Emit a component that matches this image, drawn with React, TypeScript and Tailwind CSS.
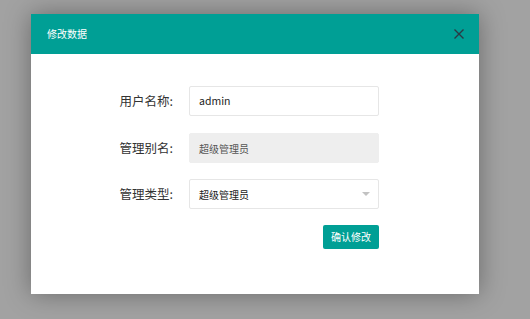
import React from "react";

const font = { fontFamily: '"Noto Sans CJK SC", "Noto Sans", sans-serif' };

function Row({ label, children, className = "" }: { label: string; children: React.ReactNode; className?: string }) {
  return (
    <div className={`flex items-center h-[30px] ${className}`}>
      <div className="w-[158px] pr-[16px] flex justify-end text-[12.5px] text-[#333333] leading-none">{label}</div>
      <div className="w-[190px] h-full">{children}</div>
    </div>
  );
}

export default function App() {
  return (
    <div className="w-[530px] h-[319px] bg-[#a2a2a2] pt-[14px] pl-[31px] overflow-hidden" style={font}>
      <div className="w-[448px] h-[280px] bg-white flex flex-col shadow-[0_0_24px_rgba(0,0,0,0.35)]">
        <div className="h-[40px] bg-[#009f95] flex items-center justify-between pl-[16px] pr-[14px]">
          <span className="text-white text-[10px] leading-none">修改数据</span>
          <svg width="10" height="10" viewBox="0 0 10 10" className="mr-[1px]">
            <path d="M0.5 0.5 L9.5 9.5 M9.5 0.5 L0.5 9.5" stroke="#2b3a44" strokeWidth="1.4" fill="none" />
          </svg>
        </div>
        <div className="flex flex-col pt-[32px]">
          <Row label="用户名称:">
            <div className="h-full border border-[#e6e6e6] rounded-[2px] flex items-center pl-[9px] text-[10.5px] text-[#222]">admin</div>
          </Row>
          <Row label="管理别名:" className="mt-[17px]">
            <div className="h-full bg-[#eeeeee] border border-[#eeeeee] rounded-[2px] flex items-center pl-[9px] text-[10px] text-[#555]">超级管理员</div>
          </Row>
          <Row label="管理类型:" className="mt-[16px]">
            <div className="h-full border border-[#e6e6e6] rounded-[2px] flex items-center justify-between pl-[9px] pr-[8px] text-[10px] text-[#222]">
              <span>超级管理员</span>
              <span className="w-0 h-0 border-l-[4.5px] border-r-[4.5px] border-t-[4.5px] border-l-transparent border-r-transparent border-t-[#c2c2c2]" />
            </div>
          </Row>
          <div className="flex justify-end pr-[100px] mt-[16px]">
            <button className="w-[56px] h-[24px] bg-[#009f95] rounded-[2px] text-white text-[10px] leading-none flex items-center justify-center">确认修改</button>
          </div>
        </div>
      </div>
    </div>
  );
}
